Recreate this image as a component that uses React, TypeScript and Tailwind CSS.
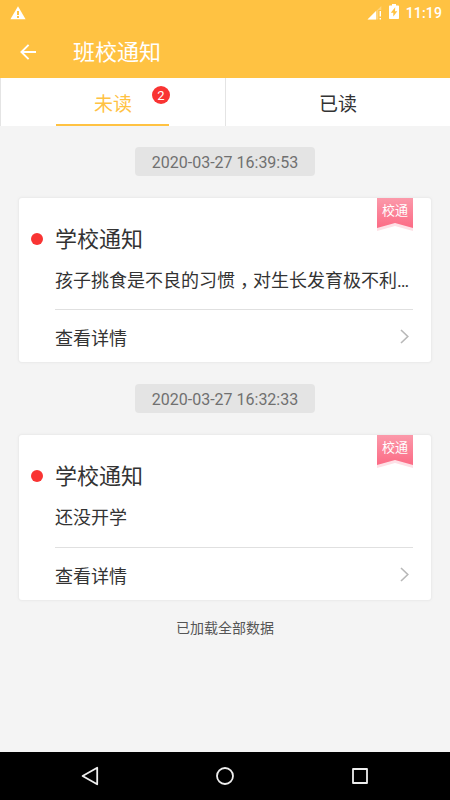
import { Fragment } from 'react';

interface Notice {
  time: string;
  title: string;
  before: string;
  after?: string;
  dividerClass: string;
}

const NOTICES: Notice[] = [
  {
    time: '2020-03-27 16:39:53',
    title: '学校通知',
    before: '孩子挑食是不良的习惯',
    after: '对生长发育极不利…',
    dividerClass: 'mt-[15px]',
  },
  {
    time: '2020-03-27 16:32:33',
    title: '学校通知',
    before: '还没开学',
    dividerClass: 'mt-[16px]',
  },
];

function StatusBar() {
  return (
    <div className="flex h-6 items-center pl-[10px] pr-2 text-white">
      <svg width="16" height="14" viewBox="0 0 16 14" className="mt-[2px]">
        <path d="M8 0.3 15.6 13.2H0.4Z" fill="currentColor" />
        <path d="M7 5h2v4H7zM7 10h2v2H7z" fill="#ffc242" />
      </svg>
      <div className="ml-auto flex items-center">
        <svg width="15" height="14" viewBox="0 0 15 14" className="mt-[2px]">
          <path d="M0.5 13.5 14.3 0v4h-3v9.5Z" fill="currentColor" opacity="0.3" />
          <path d="M0.5 13.5 9 5v8.5Z" fill="currentColor" />
          <path d="M12.6 5h1.4v5.5h-1.4zM12.6 12h1.4v1.5h-1.4z" fill="currentColor" />
        </svg>
        <svg width="10" height="15" viewBox="0 0 10 15" className="-mt-[2px] ml-[7px]">
          <path d="M3 0h4v1.5h2.2q.8 0 .8.8v12q0 .7-.8.7H.8q-.8 0-.8-.7v-12q0-.8.8-.8H3Z" fill="currentColor" />
          <path d="M6.2 3.2 1.8 8.8h2.5v3.8L8.3 7.2H6Z" fill="#ffc242" />
        </svg>
        <span className="ml-[7px] mt-[2px] text-[14px] leading-5 font-medium tracking-[0.15px]">11:19</span>
      </div>
    </div>
  );
}

function AppBar() {
  return (
    <div className="flex h-[54px] items-center pl-5 text-white">
      <svg width="16" height="16" viewBox="0 0 16 16" fill="none" stroke="currentColor" strokeWidth="1.9" className="mt-[2px]">
        <path d="M16 8H1.5M8.6 0.8 1.4 8l7.2 7.2" />
      </svg>
      <h1 className="ml-[37px] mt-1 text-[22px] leading-8">班校通知</h1>
    </div>
  );
}

function Tabs() {
  return (
    <div className="grid h-12 grid-cols-2 bg-white text-[19px] leading-[28px]">
      <div className="relative flex justify-center border-l border-[#e4e4e4] pt-[13px] text-[#ffc242]">
        未读
        <span className="absolute left-[151px] top-2 flex h-[18px] w-[18px] items-center justify-center rounded-full bg-[#f93433] pt-px text-[13px] leading-none text-white">
          2
        </span>
        <span className="absolute bottom-0 left-[55px] h-[2px] w-[113px] bg-[#ffc242]" />
      </div>
      <div className="flex justify-center border-l border-[#e4e4e4] pt-[13px] text-[#333333]">已读</div>
    </div>
  );
}

function Ribbon() {
  return (
    <div className="absolute right-[18px] top-0 h-[33px] w-9">
      <svg width="36" height="33" viewBox="0 0 36 33" className="absolute inset-0">
        <defs>
          <linearGradient id="ribbon" x1="0" y1="0" x2="0" y2="1">
            <stop offset="0" stopColor="#fb99aa" />
            <stop offset="1" stopColor="#fc6b85" />
          </linearGradient>
        </defs>
        <path d="M0 0h36v33L18 28 0 33Z" fill="#fee0e6" />
        <path d="M0 0h36v30L18 25 0 30Z" fill="url(#ribbon)" />
      </svg>
      <span className="relative block pt-[3px] text-center text-[13px] leading-5 text-white">校通</span>
    </div>
  );
}

function NoticeCard({ notice }: { notice: Notice }) {
  return (
    <div className="relative mx-[19px] rounded-[3px] bg-white pl-9 pr-[18px] text-[#333333] shadow-[0_0_2px_1px_#e9e9e9]">
      <Ribbon />
      <div className="relative pt-[26px] text-[22px] leading-8">
        <span className="absolute -left-6 top-[35px] h-3 w-3 rounded-full bg-[#f93433]" />
        {notice.title}
      </div>
      <p className="mt-[12px] whitespace-nowrap text-[18px] leading-[26px]">
        {notice.before}
        {notice.after && (
          <>
            <span className="inline-block w-[18px] indent-[5px] [font-feature-settings:'halt']">，</span>
            {notice.after}
          </>
        )}
      </p>
      <div className={`flex h-[53px] items-start border-t border-[#e0e0e0] pt-[15px] ${notice.dividerClass}`}>
        <span className="mt-px text-[18px] leading-[26px]">查看详情</span>
        <svg width="9" height="15" viewBox="0 0 9 15" fill="none" stroke="#b8b8b8" strokeWidth="1.6" className="ml-auto mr-1 mt-1">
          <path d="M1 1l6.8 6.5L1 14" />
        </svg>
      </div>
    </div>
  );
}

function NavBar() {
  return (
    <div className="grid h-12 shrink-0 grid-cols-3 place-items-center bg-black pl-[22px] pr-[23px] text-[#eeeeee]">
      <svg width="20" height="20" viewBox="0 0 20 20" fill="none" stroke="currentColor" strokeWidth="1.8" strokeLinejoin="round">
        <path d="M17.2 1.7v16.6L2.6 10Z" />
      </svg>
      <svg width="20" height="20" viewBox="0 0 20 20" fill="none" stroke="currentColor" strokeWidth="1.8">
        <circle cx="10" cy="10" r="8" />
      </svg>
      <svg width="20" height="20" viewBox="0 0 20 20" fill="none" stroke="currentColor" strokeWidth="1.8" strokeLinejoin="round">
        <path d="M3 3h14v14H3Z" />
      </svg>
    </div>
  );
}

export default function App() {
  return (
    <div className="flex h-[800px] w-[450px] flex-col overflow-hidden bg-[#f4f4f4] font-[Roboto,'Noto_Sans_CJK_SC',sans-serif]">
      <header className="shrink-0 bg-[#ffc242]">
        <StatusBar />
        <AppBar />
        <Tabs />
      </header>
      <main className="flex-1">
        {NOTICES.map((notice, idx) => (
          <Fragment key={notice.time}>
            <div
              className={`mx-auto mb-[22px] flex h-[29px] w-[180px] items-center justify-center rounded bg-[#e4e4e4] pt-[2px] text-[16px] text-[#707070] ${idx === 0 ? 'mt-[21px]' : 'mt-[22px]'}`}
            >
              {notice.time}
            </div>
            <NoticeCard notice={notice} />
          </Fragment>
        ))}
        <p className="mt-[18px] text-center text-[14px] leading-5 text-[#555555]">已加载全部数据</p>
      </main>
      <NavBar />
    </div>
  );
}
